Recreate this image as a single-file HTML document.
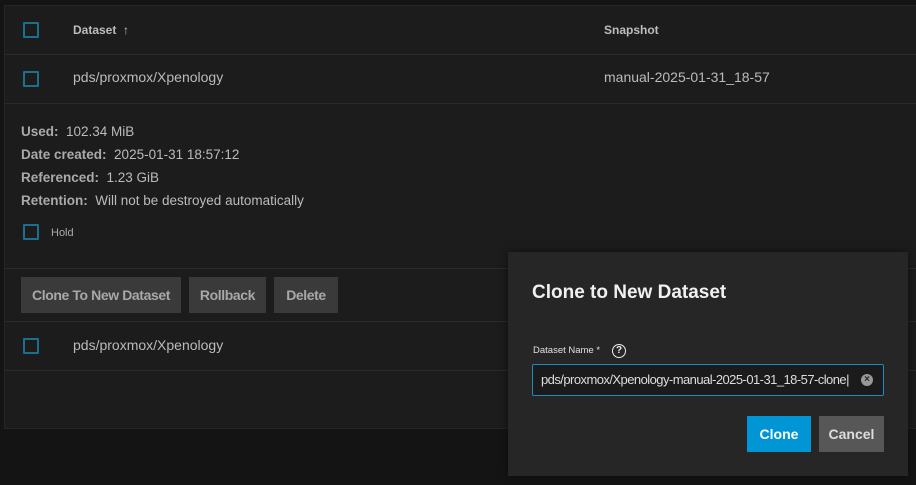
<!DOCTYPE html>
<html><head><style>
*{box-sizing:border-box;margin:0;padding:0}
body{width:916px;height:485px;background:#141414;font-family:"Liberation Sans",sans-serif;position:relative;overflow:hidden;color:#c8c8c8}
.panel{position:absolute;left:4px;top:5px;width:920px;height:424px;background:#1c1c1c;border:1px solid #262626}
.a{position:absolute}
.cb{position:absolute;width:16px;height:16px;border:2px solid #1b6f8f;border-radius:1px}
.line{position:absolute;left:0;right:0;height:1px;background:#2a2a2a}
.th{font-size:12px;font-weight:bold;color:#bdbdbd}
.td{font-size:14px;color:#bbb}
.k{font-weight:bold;color:#aaa}
.btn{position:absolute;top:277px;height:36px;background:#3a3a3a;color:#a8a8a8;font-weight:bold;font-size:14px;line-height:36px;text-align:center;letter-spacing:-0.4px}
.dlg{position:absolute;left:508px;top:252px;width:400px;height:224px;background:#262626;box-shadow:0 0 8px rgba(0,0,0,.5)}
</style></head><body>
<div class="panel">
 <div class="line" style="top:48px"></div>
 <div class="line" style="top:97px"></div>
 <div class="line" style="top:262px"></div>
 <div class="line" style="top:315px"></div>
 <div class="line" style="top:364px"></div>
</div>
<div class="cb" style="left:23px;top:22px"></div>
<div class="a th" style="left:73px;top:23px">Dataset&nbsp;&nbsp;↑</div>
<div class="a th" style="left:604px;top:23px">Snapshot</div>
<div class="cb" style="left:23px;top:71px"></div>
<div class="a td" style="left:73px;top:69px">pds/proxmox/Xpenology</div>
<div class="a td" style="left:604px;top:69px">manual-2025-01-31_18-57</div>
<div class="a td" style="left:21px;top:120px;font-size:13.5px;line-height:23px">
<div><span class="k">Used:</span>&nbsp; 102.34 MiB</div>
<div><span class="k">Date created:</span>&nbsp; 2025-01-31 18:57:12</div>
<div><span class="k">Referenced:</span>&nbsp; 1.23 GiB</div>
<div><span class="k">Retention:</span>&nbsp; Will not be destroyed automatically</div>
</div>
<div class="cb" style="left:23px;top:224px"></div>
<div class="a" style="left:51px;top:227px;font-size:11px;color:#aaa">Hold</div>
<div class="btn" style="left:21px;width:160px">Clone To New Dataset</div>
<div class="btn" style="left:189px;width:77px">Rollback</div>
<div class="btn" style="left:274px;width:64px">Delete</div>
<div class="cb" style="left:23px;top:338px"></div>
<div class="a td" style="left:73px;top:337px">pds/proxmox/Xpenology</div>
<div class="dlg">
 <div class="a" style="left:24px;top:30px;font-size:19px;font-weight:bold;color:#f0f0f0">Clone to New Dataset</div>
 <div class="a" style="left:25px;top:93px;font-size:9.5px;color:#e0e0e0">Dataset Name *</div>
 <div class="a" style="left:104px;top:92px;width:14px;height:14px;border:1.5px solid #eee;border-radius:50%;font-size:10px;font-weight:bold;text-align:center;line-height:11px;color:#eee">?</div>
 <div class="a" style="left:24px;top:112px;width:352px;height:32px;border:1px solid #1e8bc0;background:#1b1b1b;border-radius:2px">
  <div class="a" style="left:8px;top:7px;font-size:13px;color:#ddd;letter-spacing:-0.55px;white-space:nowrap">pds/proxmox/Xpenology-manual-2025-01-31_18-57-clone|</div>
  <div class="a" style="left:328px;top:9px;width:12px;height:12px;border-radius:50%;background:#999;color:#262626;font-size:10px;line-height:12px;text-align:center;font-weight:bold">×</div>
 </div>
 <div class="a" style="left:239px;top:164px;width:64px;height:36px;background:#0095d5;color:#fff;font-weight:bold;font-size:14px;line-height:36px;text-align:center">Clone</div>
 <div class="a" style="left:311px;top:164px;width:65px;height:36px;background:#575757;color:#ddd;font-weight:bold;font-size:14px;line-height:36px;text-align:center">Cancel</div>
</div>
</body></html>
